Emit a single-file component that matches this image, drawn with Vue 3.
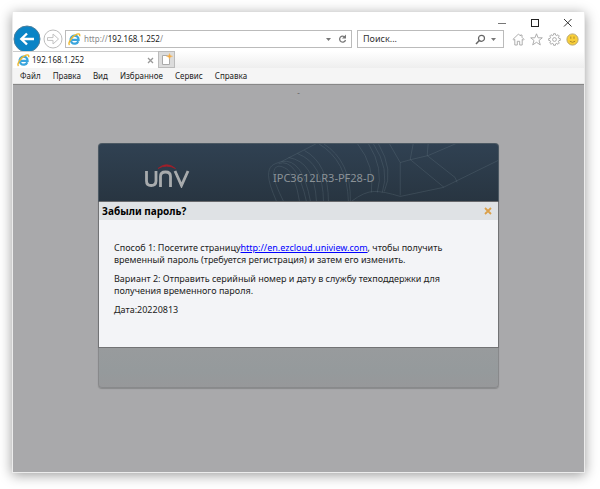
<script setup>
import { ref } from 'vue'

const address = ref('http://192.168.1.252/')
const query = ref('')
const menu = ['Файл', 'Правка', 'Вид', 'Избранное', 'Сервис', 'Справка']
</script>

<template>
  <div class="desktop">
    <div class="window">
      <div class="captions">
        <button type="button" aria-label="Свернуть">
          <svg width="9" height="9" viewBox="0 0 9 9"><path d="M1 5.500h8" stroke="#777" /></svg>
        </button>
        <button type="button" aria-label="Развернуть">
          <svg width="9" height="9" viewBox="0 0 9 9"><rect x="1.500" y="1.500" width="7" height="7" fill="none" stroke="#222" /></svg>
        </button>
        <button type="button" aria-label="Закрыть">
          <svg width="9" height="9" viewBox="0 0 9 9"><path d="M1 1l7.500 7.500M8.500 1l-7.500 7.500" stroke="#333" /></svg>
        </button>
      </div>

      <div class="toolbar">
        <button type="button" class="back" aria-label="Назад">
          <svg width="28" height="28" viewBox="0 0 28 28">
            <circle cx="14" cy="14" r="13" fill="#0a84c6" stroke="#4d7f9c" />
            <path d="M21 14H9M14 8.500L8.300 14l5.700 5.500" fill="none" stroke="#fff" stroke-width="2.400" />
          </svg>
        </button>
        <button type="button" class="forward" aria-label="Вперёд">
          <svg width="20" height="20" viewBox="0 0 20 20">
            <circle cx="10" cy="10" r="9" fill="#fff" stroke="#bcbcbc" />
            <path d="M4.500 8.600h5.500V5l5.500 5-5.500 5v-3.600H4.500z" fill="#fff" stroke="#c2c2c2" />
          </svg>
        </button>
        <form class="field address" @submit.prevent>
          <svg width="13" height="13" viewBox="0 0 13 13">
            <path d="M10.300 8.200A4 4 0 1 1 10.600 6.900H4" fill="none" stroke="#3aa5dd" stroke-width="2.300" />
            <path d="M1.500 12C-.5 10 4 3 9 1.200c2-.7 3.200 0 2.600 2" fill="none" stroke="#efb92e" stroke-width="1.400" />
          </svg>
          <label class="url">
            <input v-model="address" type="text" aria-label="Адрес" />
            <span class="shown" aria-hidden="true">http://<b>192.168.1.252</b>/</span>
          </label>
          <button type="button" aria-label="Показать адреса">
            <svg width="7" height="5" viewBox="0 0 7 5"><path d="M1 1h5L3.500 4z" fill="#777" /></svg>
          </button>
          <button type="button" aria-label="Обновить">
            <svg width="9" height="10" viewBox="0 0 9 10">
              <path d="M7 3.300A3 3 0 1 0 7.500 6" fill="none" stroke="#777" stroke-width="1.300" />
              <path d="M8 .5v4H4z" fill="#777" />
            </svg>
          </button>
        </form>
        <form class="field search" @submit.prevent>
          <input v-model="query" type="text" placeholder="Поиск..." aria-label="Поиск" />
          <button type="submit" aria-label="Найти">
            <svg width="11" height="11" viewBox="0 0 11 11">
              <circle cx="6.500" cy="4.300" r="3" fill="none" stroke="#666" stroke-width="1.200" />
              <path d="M4.300 6.600L1 10" stroke="#666" stroke-width="1.500" />
            </svg>
          </button>
          <button type="button" aria-label="Параметры поиска">
            <svg width="7" height="5" viewBox="0 0 7 5"><path d="M1 1h5L3.500 4z" fill="#777" /></svg>
          </button>
        </form>
        <div class="tools">
          <button type="button" aria-label="Домой">
            <svg width="13" height="13" viewBox="0 0 13 13"><path d="M6.500 1L1 6.300l.8.900 1-.8V12h2.500V8.300h2.400V12h2.500V6.400l1 .8.800-.9L10 4.300V2H8.500v1z" fill="#fff" stroke="#a5a5a5" stroke-width=".9" /></svg>
          </button>
          <button type="button" aria-label="Избранное">
            <svg width="13" height="13" viewBox="0 0 13 13"><path d="M6.500.8l1.600 4h4.200L9 7.500l1.300 4.400-3.800-2.600-3.800 2.600L4 7.500.7 4.800h4.200z" fill="#fff" stroke="#a5a5a5" stroke-width=".9" /></svg>
          </button>
          <button type="button" aria-label="Настройки">
            <svg width="13" height="13" viewBox="0 0 13 13">
              <path d="M5.400 2.100L5.600.7h1.800l.2 1.400 1.200.5 1.200-.9 1.300 1.300-.9 1.200.5 1.200 1.400.2v1.800l-1.400.2-.5 1.200.9 1.200-1.300 1.300-1.200-.9-1.200.5-.2 1.400H5.600l-.2-1.400-1.200-.5-1.200.9L1.700 10l.9-1.200-.5-1.200L.7 7.400V5.600l1.400-.2.500-1.200L1.700 3 3 1.700l1.200.9z" fill="#fff" stroke="#a5a5a5" stroke-width=".9" />
              <circle cx="6.500" cy="6.500" r="1.900" fill="#fff" stroke="#a5a5a5" stroke-width=".9" />
            </svg>
          </button>
          <button type="button" aria-label="Отправить отзыв">
            <svg width="13" height="13" viewBox="0 0 13 13">
              <circle cx="6.500" cy="6.500" r="5.600" fill="#f9cf39" stroke="#b8a771" />
              <path d="M4.800 3.500v2.300M8 3.500v2.300M3.800 8.200q2.700 2.200 5.400 0" fill="none" stroke="#b18c28" />
            </svg>
          </button>
        </div>
      </div>

      <div class="tabs">
        <div class="tab">
          <svg width="13" height="13" viewBox="0 0 13 13">
            <path d="M10.300 8.200A4 4 0 1 1 10.600 6.900H4" fill="none" stroke="#3aa5dd" stroke-width="2.300" />
            <path d="M1.500 12C-.5 10 4 3 9 1.200c2-.7 3.200 0 2.600 2" fill="none" stroke="#efb92e" stroke-width="1.400" />
          </svg>
          <span>192.168.1.252</span>
          <button type="button" aria-label="Закрыть вкладку">
            <svg width="7" height="7" viewBox="0 0 7 7"><path d="M1 1l5 5M6 1L1 6" stroke="#999" stroke-width="1.300" /></svg>
          </button>
        </div>
        <button type="button" class="new-tab" aria-label="Новая вкладка">
          <svg width="13" height="13" viewBox="0 0 13 13">
            <path d="M2.500 2.500h5l2 2v7h-7z" fill="#fff" stroke="#aaa" />
            <path d="M9.500.5l.8 2 2.200.8-2.200.8-.8 2-.8-2-2.200-.8 2.200-.8z" fill="#f5a83a" stroke="#f2bd70" stroke-width=".6" />
          </svg>
        </button>
      </div>

      <nav class="menu">
        <button v-for="item in menu" :key="item" type="button">{{ item }}</button>
      </nav>

      <main class="page">
        <div class="mark">-</div>
        <section class="login">
          <header class="banner">
            <svg class="art" viewBox="0 0 400 58" preserveAspectRatio="xMidYMid slice" aria-hidden="true">
              <g fill="none" stroke="#7c8f9b" stroke-opacity=".22">
                <path d="M178 58Q170 40 170 32C170 22 174 21 183 18L218 0" />
                <path d="M185 58Q175 38 175 30C176 21 181 21 189 26Q197 33 201 58" />
                <path d="M180 20Q198 14 208 58M183 18Q204 14 212 58" />
                <path d="M190 14Q216 18 218 58M199 10Q225 20 225 58M206 7Q230 20 230 58" />
                <path d="M220 0Q249 17 250 58M225 0Q253 18 252 58" />
                <path d="M259 0Q277 23 273 49M270 0Q286 25 279 49M275 0Q292 26 284 49M280 0Q296 27 286 48" />
                <path d="M253 58Q266 48 276 48T302 53L345 44L400 17" />
                <path d="M291 0L302 19V52M302 19L313 16L330 12L358 0M315 0L312 16L346 44M330 0L329 12L357 34L359 39" />
              </g>
            </svg>
            <svg class="logo" width="46" height="25" viewBox="0 0 46 25" role="img" aria-label="UNV">
              <g fill="none" stroke="#a8abad" stroke-width="2.800">
                <path d="M1.500 8v10q0 4.500 4.700 4.500T11 18V8" />
                <path d="M15.500 24V13.500q0-4.500 5-4.500t5 4.500V24" />
                <path d="M30 8l6.500 14.500L43 8" />
              </g>
              <path d="M13 5.500Q21.500-2.200 30.500 5.500 21.500.8 13 5.500z" fill="#a3202a" stroke="#a3202a" stroke-width=".7" />
            </svg>
            <span class="model">IPC3612LR3-PF28-D</span>
          </header>
          <div class="dialog" role="dialog" aria-labelledby="forgot">
            <div class="dialog-title">
              <h1 id="forgot">Забыли пароль?</h1>
              <button type="button" aria-label="Закрыть">
                <svg width="8" height="8" viewBox="0 0 8 8"><path d="M1 1l6 6M7 1L1 7" stroke="#dba04a" stroke-width="1.800" /></svg>
              </button>
            </div>
            <div class="dialog-body">
              <p>Способ 1: Посетите страницу<a href="http://en.ezcloud.uniview.com">http://en.ezcloud.uniview.com</a>, чтобы получить временный пароль (требуется регистрация) и затем его изменить.</p>
              <p>Вариант 2: Отправить серийный номер и дату в службу техподдержки для получения временного пароля.</p>
              <p>Дата:20220813</p>
            </div>
          </div>
          <div class="footer"></div>
        </section>
      </main>
    </div>
  </div>
</template>

<style>
body {
  background: #fff;
}
</style>

<style scoped>
.desktop,
.desktop * {
  box-sizing: border-box;
}
.desktop {
  display: flex;
  min-height: 100vh;
  padding: 12px 15px 16px 12px;
  font: 9px/12px "Noto Sans", "Open Sans", sans-serif;
  color: #222;
}
button {
  display: flex;
  align-items: center;
  justify-content: center;
  margin: 0;
  padding: 0;
  border: 0;
  background: none;
  color: inherit;
  font: inherit;
}
input {
  min-width: 0;
  padding: 0;
  border: 0;
  outline: 0;
  background: none;
  color: #222;
  font: inherit;
}
input::placeholder {
  color: #333;
  opacity: 1;
}
svg {
  display: block;
  flex: none;
}
.window {
  display: flex;
  flex: 1;
  flex-direction: column;
  min-width: 0;
  border: 1px solid #ececec;
  border-top: 0;
  background: #fff;
  box-shadow: 0 2px 12px rgba(0, 0, 0, 0.4);
}
.captions {
  display: flex;
  justify-content: flex-end;
  gap: 24px;
  padding: 6px 12px 0 0;
}
.toolbar {
  display: flex;
  align-items: center;
  height: 24px;
  padding-right: 5px;
}
.forward {
  margin: 0 2px;
}
.field {
  display: flex;
  align-items: center;
  height: 18px;
  border: 1px solid #bbb;
  background: #fff;
}
.address {
  flex: 1;
  gap: 6px;
  min-width: 0;
  padding: 0 4px 0 2px;
}
.search {
  gap: 4px;
  width: 147px;
  margin: 0 8px 0 5px;
  padding: 0 6px 0 5px;
}
.search input {
  flex: 1;
}
.url {
  display: grid;
  flex: 1;
  margin-left: -3px;
  font-size: 8px;
}
.url input,
.shown {
  grid-area: 1 / 1;
}
.url input {
  color: transparent;
}
.shown {
  color: #888;
  pointer-events: none;
}
.shown b {
  color: #222;
  font-weight: 400;
}
.tools {
  display: flex;
  gap: 5px;
}
.tabs {
  display: flex;
  height: 17px;
  background: linear-gradient(#fff, #eee);
}
.tab {
  display: flex;
  align-items: center;
  gap: 2px;
  width: 145px;
  padding: 0 4px;
  border-top: 1px solid #ccc;
  background: #fff;
  font-size: 8px;
}
.tab span {
  flex: 1;
}
.new-tab {
  width: 17px;
  border: 1px solid #bbb;
  background: #dcdcdc;
}
.menu {
  display: flex;
  gap: 12px;
  height: 16px;
  padding-left: 7px;
  border-bottom: 1px solid #e6e6e6;
  background: #f5f5f5;
  font-size: 8px;
}
.page {
  display: flex;
  flex: 1;
  flex-direction: column;
  padding: 0 85px;
  border-top: 1px solid #888;
  background: #a9a9ab;
}
.mark {
  height: 58px;
  padding-top: 2px;
  color: #666;
  font-size: 8px;
  text-align: center;
}
.login {
  border-radius: 4px;
  box-shadow: 0 1px 1px #88898a;
}
.banner {
  display: flex;
  position: relative;
  align-items: center;
  height: 59px;
  padding: 6px 0 0 46px;
  border: 1px solid #4c5963;
  border-bottom-color: #68696c;
  border-radius: 4px 4px 0 0;
  background: linear-gradient(#304152, #283541);
  overflow: hidden;
}
.art {
  position: absolute;
  inset: 0;
  width: 100%;
  height: 100%;
}
.logo,
.model {
  position: relative;
}
.model {
  margin: 5px 0 0 82px;
  color: #8b9297;
  font-size: 11px;
  line-height: 14px;
}
.dialog {
  border: 1px solid #727375;
  border-top: 0;
  background: #f3f4f7;
}
.dialog-title {
  display: flex;
  align-items: center;
  justify-content: space-between;
  height: 18px;
  padding: 0 6px 0 3px;
  background: #dfe2e5;
}
.dialog-title h1 {
  margin: 0;
  color: #000;
  font-size: 10px;
  line-height: 14px;
}
.dialog-body {
  min-height: 127px;
  padding: 22px 40px 0 15px;
}
.dialog-body p {
  margin: 0 0 7px;
}
.dialog-body a {
  color: #00f;
}
.footer {
  height: 40px;
  border: 1px solid #88898b;
  border-top: 0;
  border-radius: 0 0 4px 4px;
  background: linear-gradient(#989b9d, #959a9c 60%, #97989a);
}
</style>
